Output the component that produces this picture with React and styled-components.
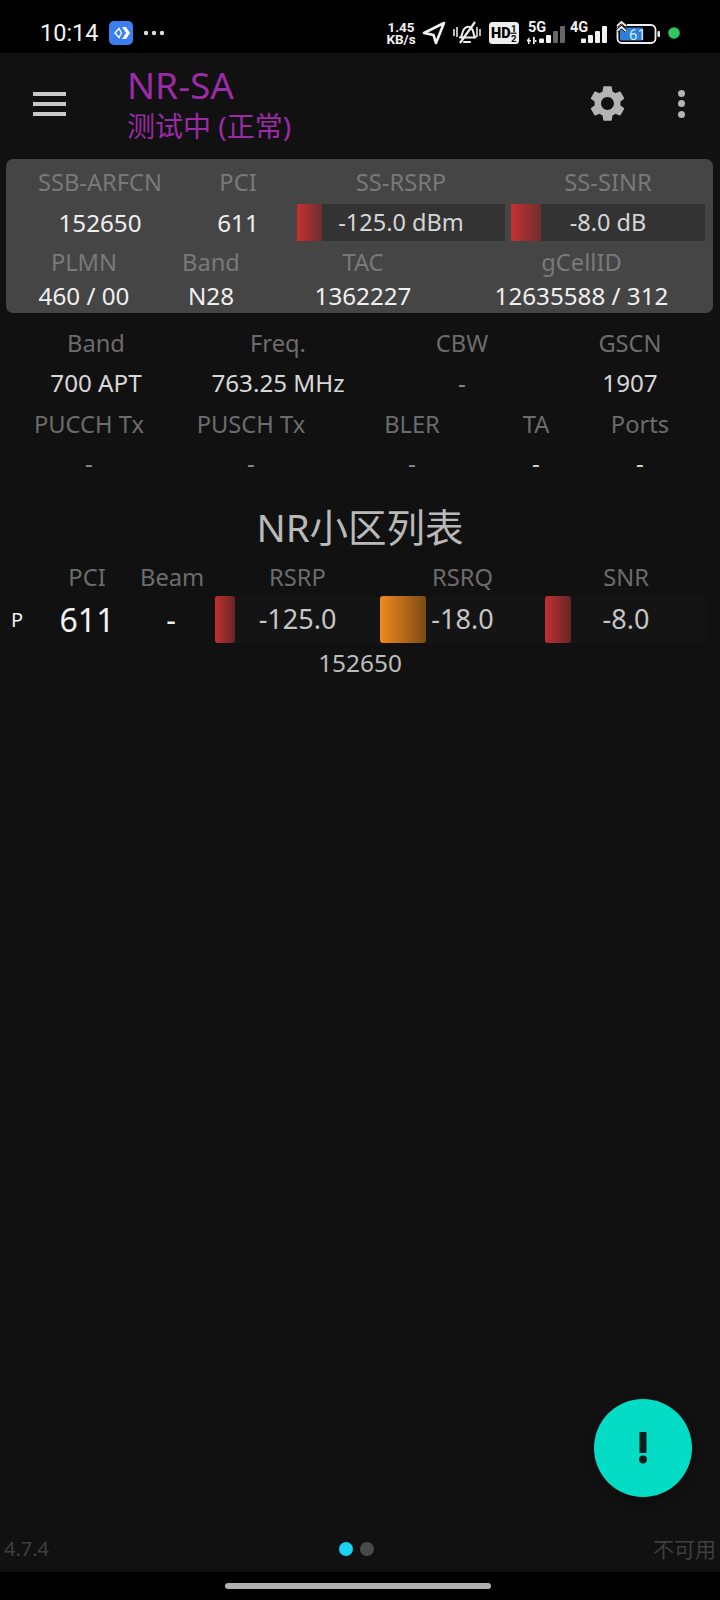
import React from 'react';
import styled, { createGlobalStyle } from 'styled-components';
import { MdSettings } from 'react-icons/md';

const FONT = `"Noto Sans", "Noto Sans CJK SC", sans-serif`;

const GlobalStyle = createGlobalStyle`
  html, body {
    margin: 0;
    padding: 0;
    background: #111;
  }
  * {
    box-sizing: border-box;
  }
`;

const Screen = styled.div`
  position: relative;
  display: flex;
  flex-direction: column;
  width: 720px;
  height: 1600px;
  overflow: hidden;
  background: #111;
  font-family: ${FONT};
`;

const StatusBar = styled.div`
  display: flex;
  align-items: center;
  height: 53px;
  padding: 13px 40px 0 40px;
  background: #000;
  color: #f2f2f2;
  flex: none;
`;

const Clock = styled.span`
  font-family: Roboto, sans-serif;
  font-size: 23.5px;
  width: 69px;
`;

const AppBadge = styled.svg`
  width: 24px;
  height: 24px;
`;

const Ellipsis = styled.svg`
  width: 22px;
  height: 6px;
  margin-left: 10px;
`;

const StatusIcons = styled.div`
  display: flex;
  align-items: center;
  margin-left: auto;
`;

const Speed = styled.div`
  display: flex;
  flex-direction: column;
  align-items: center;
  width: 32px;
  margin-right: 5px;
  font-family: Roboto, sans-serif;
  font-size: 13.5px;
  font-weight: 700;
  line-height: 12px;
`;

const StatusSvg = styled.svg`
  display: block;
  flex: none;
  margin-right: ${(p) => p.$gap || 0}px;
`;

const AppBar = styled.header`
  display: flex;
  align-items: center;
  height: 106px;
  padding: 0 0 5px 33px;
  flex: none;
`;

const Burger = styled.div`
  display: flex;
  flex-direction: column;
  gap: 6px;
  width: 33px;
  margin-right: 61px;
  i {
    display: block;
    height: 4px;
    background: #c9c9c9;
  }
`;

const TitleBlock = styled.div`
  display: flex;
  flex-direction: column;
  flex: 1;
  color: #9b2ba6;
`;

const AppTitle = styled.div`
  font-size: 37px;
  line-height: 44px;
`;

const AppSub = styled.div`
  font-size: 28px;
  line-height: 38px;
`;

const Gear = styled(MdSettings)`
  color: #b3b3b3;
  margin-right: 49px;
`;

const Kebab = styled.div`
  display: flex;
  flex-direction: column;
  gap: 3.5px;
  margin-right: 35px;
  i {
    display: block;
    width: 7px;
    height: 7px;
    border-radius: 50%;
    background: #b3b3b3;
  }
`;

const Card = styled.section`
  display: flex;
  flex-direction: column;
  height: 154px;
  margin: 0 7px 0 6px;
  padding: 5px 8px 0;
  background: #454545;
  border-radius: 7px;
`;

const Row = styled.div`
  display: grid;
  grid-template-columns: ${(p) => p.$cols};
  height: ${(p) => p.$h}px;
  align-items: center;
  text-align: center;
`;

const Label = styled.div`
  font-size: 23.7px;
  color: ${(p) => (p.$onCard ? '#797979' : '#6c6c6c')};
  white-space: nowrap;
`;

const Value = styled.div`
  font-size: 24.2px;
  color: ${(p) => p.$color || '#efefef'};
  white-space: nowrap;
`;

const MeterSlot = styled.div`
  padding-left: ${(p) => p.$inset || 0}px;
`;

const Meter = styled.div`
  position: relative;
  display: flex;
  align-items: center;
  justify-content: center;
  height: 37px;
  background: #333;
  font-size: 23.5px;
  color: #d6d6d6;
  white-space: nowrap;
  span {
    position: relative;
  }
`;

const MeterFill = styled.div`
  position: absolute;
  left: 0;
  top: 0;
  bottom: 0;
  background: linear-gradient(90deg, #c62f30, #6f2f2f);
`;

const InfoGrid = styled.section`
  display: flex;
  flex-direction: column;
  margin-top: 10px;
`;

const SectionTitle = styled.h2`
  margin: 25px 0 6px;
  height: 48px;
  font-size: 38.5px;
  line-height: 48px;
  font-weight: 400;
  text-align: center;
  color: #b9b9b9;
`;

const CellRow = styled.div`
  display: grid;
  grid-template-columns: 34px 106px 75px 165px 165px 162px;
  align-items: center;
  text-align: center;
  height: ${(p) => p.$h}px;
`;

const Beam = styled.div`
  padding-right: 13px;
  font-size: ${(p) => (p.$big ? 30 : 23.7)}px;
  color: ${(p) => (p.$big ? '#eee' : '#6c6c6c')};
`;

const Primary = styled.div`
  font-size: 20px;
  color: #eee;
`;

const BigPci = styled.div`
  font-size: 32px;
  color: #f4f4f4;
`;

const CellMeter = styled.div`
  position: relative;
  display: flex;
  align-items: center;
  justify-content: center;
  height: 47px;
  padding-bottom: 2px;
  background: #141414;
  font-size: 27px;
  color: #c6c6c6;
  span {
    position: relative;
  }
`;

const CellFill = styled.div`
  position: absolute;
  top: 0;
  bottom: 0;
  left: 0;
  width: ${(p) => p.$width}px;
  border-radius: 3px;
  background: ${(p) =>
    p.$tone === 'orange'
      ? 'linear-gradient(90deg, #f08a20, #7c4a12)'
      : 'linear-gradient(90deg, #c22f30, #662626)'};
`;

const Arfcn = styled.div`
  font-size: 24.4px;
  line-height: 40px;
  text-align: center;
  color: #bdbdbd;
`;

const Spacer = styled.div`
  flex: 1;
`;

const Footer = styled.footer`
  display: grid;
  grid-template-columns: 1fr auto 1fr;
  align-items: center;
  height: 48px;
  padding: 0 4px;
  font-size: 20px;
  color: #3f3f3f;
  flex: none;
`;

const FooterRight = styled.div`
  text-align: right;
  font-size: 21px;
`;

const Pager = styled.div`
  display: flex;
  gap: 7px;
  margin: 2px 8px 0 0;
`;

const Dot = styled.i`
  display: block;
  width: 14px;
  height: 14px;
  border-radius: 50%;
  background: ${(p) => (p.$active ? '#1ad3f4' : '#4a4a4a')};
`;

const NavBar = styled.div`
  display: flex;
  justify-content: center;
  align-items: center;
  height: 28px;
  background: #000;
  flex: none;
`;

const HomePill = styled.div`
  width: 266px;
  height: 6px;
  margin-right: 4px;
  border-radius: 3px;
  background: #b0b0b0;
`;

const Fab = styled.button`
  position: absolute;
  left: 594px;
  top: 1399px;
  display: flex;
  align-items: center;
  justify-content: center;
  width: 98px;
  height: 98px;
  padding: 0;
  border: none;
  border-radius: 50%;
  background: #04dcc6;
  box-shadow: 0 4px 10px rgba(0, 0, 0, 0.35);
`;

const SignalIcon = ({ label, dim, gap = 0 }) => (
  <StatusSvg width="40" height="30" viewBox="0 0 40 30" $gap={gap}>
    <text x="2" y="14" fontFamily="Roboto, sans-serif" fontSize="14.5" fontWeight="700" fill="#f2f2f2">
      {label}
    </text>
    {dim && <path d="M1 22l2.500-3v3H5v1.500H3.500V26H2v-2.500H1zM7 19h1.800v7H7zM9 22h1.500v2H9z" fill="#eee" />}
    <rect x="13" y="20.500" width="5" height="4.500" fill="#f2f2f2" rx="1" />
    <rect x="20" y="17" width="5" height="8" fill="#f2f2f2" rx="1" />
    <rect x="27" y="13" width="5" height="12" fill={dim ? '#666' : '#f2f2f2'} rx="1" />
    <rect x="34" y="8" width="5" height="17" fill={dim ? '#666' : '#f2f2f2'} rx="1" />
  </StatusSvg>
);

const CARD_TOP = '172px 104px 215px 200px';
const CARD_BOTTOM = '140px 114px 190px 247px';
const INFO_TOP = '192px 172px 196px 140px';
const INFO_BOTTOM = '178px 146px 176px 72px 136px';

export default function App() {
  return (
    <Screen>
      <GlobalStyle />
      <StatusBar>
        <Clock>10:14</Clock>
        <AppBadge viewBox="0 0 24 24">
          <rect width="24" height="24" rx="5" fill="#3a80f0" />
          <path d="M13 6h4l4 6-4 6h-4l4-6z" fill="#fff" />
          <path d="M10 7.500l-4 4.500 4 4.500 2.500-4.500z" fill="none" stroke="#fff" strokeWidth="1.4" />
        </AppBadge>
        <Ellipsis viewBox="0 0 22 6">
          <circle cx="3" cy="3" r="2.200" fill="#ddd" />
          <circle cx="11" cy="3" r="2.200" fill="#ddd" />
          <circle cx="19" cy="3" r="2.200" fill="#ddd" />
        </Ellipsis>
        <StatusIcons>
          <Speed>
            <span>1.45</span>
            <span>KB/s</span>
          </Speed>
          <StatusSvg width="24" height="24" viewBox="0 0 24 24" $gap={6}>
            <path d="M22 2L2 12l9.500 2L14 22z" fill="none" stroke="#f2f2f2" strokeWidth="2.600" strokeLinejoin="round" />
          </StatusSvg>
          <StatusSvg width="30" height="26" viewBox="0 0 30 26" $gap={7}>
            <path d="M9 17c2-3 1-9 6-10 4-1 6 3 6.500 6s1 3 2 4.500H8z" fill="none" stroke="#eee" strokeWidth="2" strokeLinejoin="round" />
            <path d="M12 22h6" stroke="#eee" strokeWidth="2.200" strokeLinecap="round" />
            <path d="M8 23L23 2" stroke="#eee" strokeWidth="2.200" />
            <path d="M2 9v7M5 7v10M25 7v10M28 9v7" stroke="#ccc" strokeWidth="1.800" />
          </StatusSvg>
          <StatusSvg width="30" height="22" viewBox="0 0 30 22" $gap={7}>
            <rect width="30" height="22" rx="3.500" fill="#eee" />
            <text x="2" y="16" fontFamily="Roboto, sans-serif" fontSize="14.500" fontWeight="900" fill="#000">HD</text>
            <text x="22" y="10" fontFamily="Roboto, sans-serif" fontSize="9.500" fontWeight="700" fill="#000">1</text>
            <path d="M21.500 11.200h6" stroke="#000" strokeWidth="1.200" />
            <text x="22" y="20" fontFamily="Roboto, sans-serif" fontSize="9.500" fontWeight="700" fill="#000">2</text>
          </StatusSvg>
          <SignalIcon label="5G" dim gap={2} />
          <SignalIcon label="4G" gap={8} />
          <StatusSvg width="44" height="26" viewBox="0 0 44 26" $gap={8}>
            <rect x="1.500" y="5" width="38" height="18" rx="4.500" fill="none" stroke="#f0f0f0" strokeWidth="1.800" />
            <rect x="4" y="7.500" width="23" height="13" rx="1.500" fill="#2f7fd6" />
            <path d="M1 6l4.500-4 4.500 4M1 11l4.500-4 4.500 4" fill="none" stroke="#000" strokeWidth="3.500" />
            <path d="M1 6l4.500-4 4.500 4M1 11l4.500-4 4.500 4" fill="none" stroke="#f0f0f0" strokeWidth="1.800" />
            <rect x="41.500" y="11" width="2.500" height="6" rx="1" fill="#eee" />
            <text x="13" y="19.500" fontFamily="Roboto, sans-serif" fontSize="15" fill="#cfe8ff">61</text>
          </StatusSvg>
          <StatusSvg width="12" height="12" viewBox="0 0 12 12">
            <circle cx="6" cy="6" r="5.800" fill="#2fc761" />
          </StatusSvg>
        </StatusIcons>
      </StatusBar>

      <AppBar>
        <Burger>
          <i />
          <i />
          <i />
        </Burger>
        <TitleBlock>
          <AppTitle>NR-SA</AppTitle>
          <AppSub>测试中 (正常)</AppSub>
        </TitleBlock>
        <Gear size={43} />
        <Kebab>
          <i />
          <i />
          <i />
        </Kebab>
      </AppBar>

      <Card>
        <Row $cols={CARD_TOP} $h={36}>
          <Label $onCard>SSB-ARFCN</Label>
          <Label $onCard>PCI</Label>
          <MeterSlot $inset={7}>
            <Label $onCard>SS-RSRP</Label>
          </MeterSlot>
          <MeterSlot $inset={6}>
            <Label $onCard>SS-SINR</Label>
          </MeterSlot>
        </Row>
        <Row $cols={CARD_TOP} $h={44}>
          <Value>152650</Value>
          <Value>611</Value>
          <MeterSlot $inset={7}>
            <Meter>
              <MeterFill style={{ width: 25 }} />
              <span>-125.0 dBm</span>
            </Meter>
          </MeterSlot>
          <MeterSlot $inset={6}>
            <Meter>
              <MeterFill style={{ width: 30 }} />
              <span>-8.0 dB</span>
            </Meter>
          </MeterSlot>
        </Row>
        <Row $cols={CARD_BOTTOM} $h={35}>
          <Label $onCard>PLMN</Label>
          <Label $onCard>Band</Label>
          <Label $onCard>TAC</Label>
          <Label $onCard>gCellID</Label>
        </Row>
        <Row $cols={CARD_BOTTOM} $h={31}>
          <Value>460 / 00</Value>
          <Value>N28</Value>
          <Value>1362227</Value>
          <Value>12635588 / 312</Value>
        </Row>
      </Card>

      <InfoGrid>
        <Row $cols={INFO_TOP} $h={40}>
          <Label>Band</Label>
          <Label>Freq.</Label>
          <Label>CBW</Label>
          <Label>GSCN</Label>
        </Row>
        <Row $cols={INFO_TOP} $h={38}>
          <Value $color="#d8d8d8">700 APT</Value>
          <Value $color="#d8d8d8">763.25 MHz</Value>
          <Value $color="#8a8a8a">-</Value>
          <Value $color="#d8d8d8">1907</Value>
        </Row>
        <Row $cols={INFO_BOTTOM} $h={45}>
          <Label>PUCCH Tx</Label>
          <Label>PUSCH Tx</Label>
          <Label>BLER</Label>
          <Label>TA</Label>
          <Label>Ports</Label>
        </Row>
        <Row $cols={INFO_BOTTOM} $h={32}>
          <Value $color="#8a8a8a">-</Value>
          <Value $color="#8a8a8a">-</Value>
          <Value $color="#8a8a8a">-</Value>
          <Value $color="#d8d8d8">-</Value>
          <Value $color="#d8d8d8">-</Value>
        </Row>
      </InfoGrid>

      <SectionTitle>NR小区列表</SectionTitle>
      <CellRow $h={39}>
        <span />
        <Label>PCI</Label>
        <Beam>Beam</Beam>
        <Label>RSRP</Label>
        <Label>RSRQ</Label>
        <Label>SNR</Label>
      </CellRow>
      <CellRow $h={47}>
        <Primary>P</Primary>
        <BigPci>611</BigPci>
        <Beam $big>-</Beam>
        <CellMeter>
          <CellFill $width={20} />
          <span>-125.0</span>
        </CellMeter>
        <CellMeter>
          <CellFill $width={46} $tone="orange" />
          <span>-18.0</span>
        </CellMeter>
        <CellMeter>
          <CellFill $width={26} />
          <span>-8.0</span>
        </CellMeter>
      </CellRow>
      <Arfcn>152650</Arfcn>

      <Spacer />

      <Footer>
        <div>4.7.4</div>
        <Pager>
          <Dot $active />
          <Dot />
        </Pager>
        <FooterRight>不可用</FooterRight>
      </Footer>
      <NavBar>
        <HomePill />
      </NavBar>

      <Fab aria-label="status">
        <svg width="14" height="34" viewBox="0 0 14 34">
          <rect x="3.500" y="1" width="7" height="21" fill="#06201d" />
          <circle cx="7" cy="28.500" r="4" fill="#06201d" />
        </svg>
      </Fab>
    </Screen>
  );
}
